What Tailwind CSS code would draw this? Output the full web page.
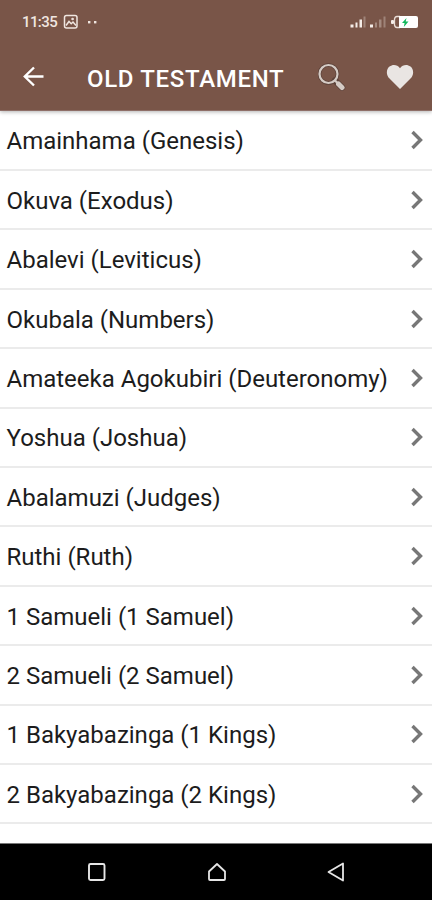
<!DOCTYPE html>
<html lang="en">
<head>
  <meta charset="UTF-8" />
  <meta name="viewport" content="width=device-width, initial-scale=1.0"/>
  <title>Old Testament</title>
  <script src="https://cdn.jsdelivr.net/npm/@tailwindcss/browser@4"></script>
</head>
<body class="h-[900px] w-[432px] overflow-hidden flex flex-col bg-white font-['Roboto',sans-serif] text-[#1c1c1c]">

  <!-- App header -->
  <header class="relative z-10 h-[111px] shrink-0 bg-[#795548] border-b border-[#8f6f68] shadow-[0_1px_4px_rgba(0,0,0,0.3)] text-white">

    <!-- Status bar -->
    <div class="h-11 flex items-center justify-between pl-[22px] pr-[13px]">
      <div class="flex items-center text-[#f0e6e0]">
        <span class="w-[41px] mt-px text-[15px] leading-none font-medium tracking-[-0.6px]">11:35</span>
        <svg class="w-4 h-4" viewBox="0 0 16 16" fill="none" stroke="currentColor" stroke-width="1.5">
          <rect x="1.5" y="1.5" width="12.5" height="12.5" rx="2" />
          <path d="M3 11.5 6 7.5l2.2 2.2L10 8l3 3.5" />
          <circle cx="9.6" cy="5" r=".6" />
        </svg>
        <svg class="w-4 h-4 ml-1" viewBox="0 0 16 16" fill="currentColor">
          <rect x="5" y="7" width="2.4" height="2.4" />
          <rect x="11" y="7" width="2.4" height="2.4" />
        </svg>
      </div>
      <svg class="w-[70px] h-4" viewBox="0 0 70 16" fill="#f5ede8">
        <rect x="1.5" y="10.5" width="3" height="3" />
        <rect x="6.5" y="8.5" width="2" height="5" />
        <rect x="10.5" y="5.5" width="2.5" height="8" />
        <rect x="14.5" y="2.5" width="2" height="11" opacity=".3" />
        <rect x="21" y="10.5" width="3" height="3" />
        <rect x="26" y="8.5" width="2" height="5" opacity=".35" />
        <rect x="30" y="5.5" width="2.5" height="8" opacity=".35" />
        <rect x="34.5" y="2.5" width="2" height="11" opacity=".3" />
        <path d="M51 2.5h-3q-2 0-2.500 2.500v6q.5 2.500 2.500 2.500h3" fill="none" stroke="#e9ddd6" stroke-width="1.300" />
        <rect x="42" y="6" width="3" height="4" rx="1" />
        <path d="M50 2h17q2 0 2 2v8q0 2-2 2H50z" fill="#fff" />
        <path d="M57.5 4 53 9h2.600l-.8 4L59.500 7.500h-2.800z" fill="#12b85c" />
      </svg>
    </div>

    <!-- Toolbar -->
    <div class="h-[66px] flex items-center pl-[22px] pr-[18px]">
      <svg class="w-6 h-6 shrink-0" viewBox="0 0 24 24" fill="none" stroke="#fff" stroke-width="2.4">
        <path d="M21.500 11.500H3M12 2.500 2.800 11.500 12 20.500" />
      </svg>
      <h1 class="ml-[41px] w-[231px] mt-[3px] text-[24px] leading-7 font-medium tracking-[0.68px] whitespace-nowrap">OLD TESTAMENT</h1>
      <svg class="w-7 h-7 shrink-0" viewBox="0 0 28 28" fill="none">
        <circle cx="10.5" cy="11" r="9" stroke="#5c423a" stroke-width="3.6" />
        <path d="m17 17.500 7 7" stroke="#5c423a" stroke-width="6.5" stroke-linecap="round" />
        <circle cx="10.5" cy="11" r="9" stroke="#d5cbc5" stroke-width="2.2" />
        <path d="m16.500 17 3 3" stroke="#d5cbc5" stroke-width="2.2" />
        <path d="m20.500 21 3.500 3.500" stroke="#d5cbc5" stroke-width="5" stroke-linecap="round" />
      </svg>
      <svg class="ml-auto w-[28px] h-[26px] shrink-0" viewBox="0 0 28 26">
        <path d="M14 25 3.500 14.500C-.5 10.500.5 5 3.500 2.600 7-.2 11.500.8 14 4.200 16.500.8 21-.2 24.500 2.600c3 2.400 4 7.900 0 11.900z" fill="#e9e5e3" />
      </svg>
    </div>
  </header>

  <!-- Book list -->
  <main class="flex-1 overflow-hidden pt-[0.7px]">
    <ul id="books"></ul>
  </main>

  <!-- System navigation -->
  <nav class="h-[57px] shrink-0 bg-black border-t border-[#777] grid grid-cols-[193px_47px_192px] items-center justify-items-center text-[#e6e6e6]">
    <svg class="w-5 h-5" viewBox="0 0 20 20" fill="none" stroke="currentColor" stroke-width="1.9">
      <rect x="2" y="2" width="15.5" height="16" rx="1.5" />
    </svg>
    <svg class="w-5 h-5" viewBox="0 0 20 20" fill="none" stroke="currentColor" stroke-width="1.8" stroke-linejoin="round">
      <path d="M2 9.500 10 2l8 7.500V17q0 1-1 1H3q-1 0-1-1z" />
    </svg>
    <svg class="w-5 h-5" viewBox="0 0 20 20" fill="none" stroke="currentColor" stroke-width="1.8" stroke-linejoin="round">
      <path d="M17 1.500v17L2.500 10z" />
    </svg>
  </nav>

  <script>
    const books = [
      'Amainhama (Genesis)',
      'Okuva (Exodus)',
      'Abalevi (Leviticus)',
      'Okubala (Numbers)',
      'Amateeka Agokubiri (Deuteronomy)',
      'Yoshua (Joshua)',
      'Abalamuzi (Judges)',
      'Ruthi (Ruth)',
      '1 Samueli (1 Samuel)',
      '2 Samueli (2 Samuel)',
      '1 Bakyabazinga (1 Kings)',
      '2 Bakyabazinga (2 Kings)'
    ];

    document.getElementById('books').innerHTML = books.map(name => `
      <li class="h-[59.4px] flex items-center justify-between pl-[6.5px] pr-[7px] border-b-2 border-[#ebebeb]">
        <span class="text-[24px] leading-7 mt-[2px] whitespace-nowrap">${name}</span>
        <svg class="w-4 h-5 shrink-0" viewBox="0 0 16 20" fill="none" stroke="#777" stroke-width="3.4">
          <path d="m3.500 2 8 8-8 8" />
        </svg>
      </li>`).join('');
  </script>
</body>
</html>
